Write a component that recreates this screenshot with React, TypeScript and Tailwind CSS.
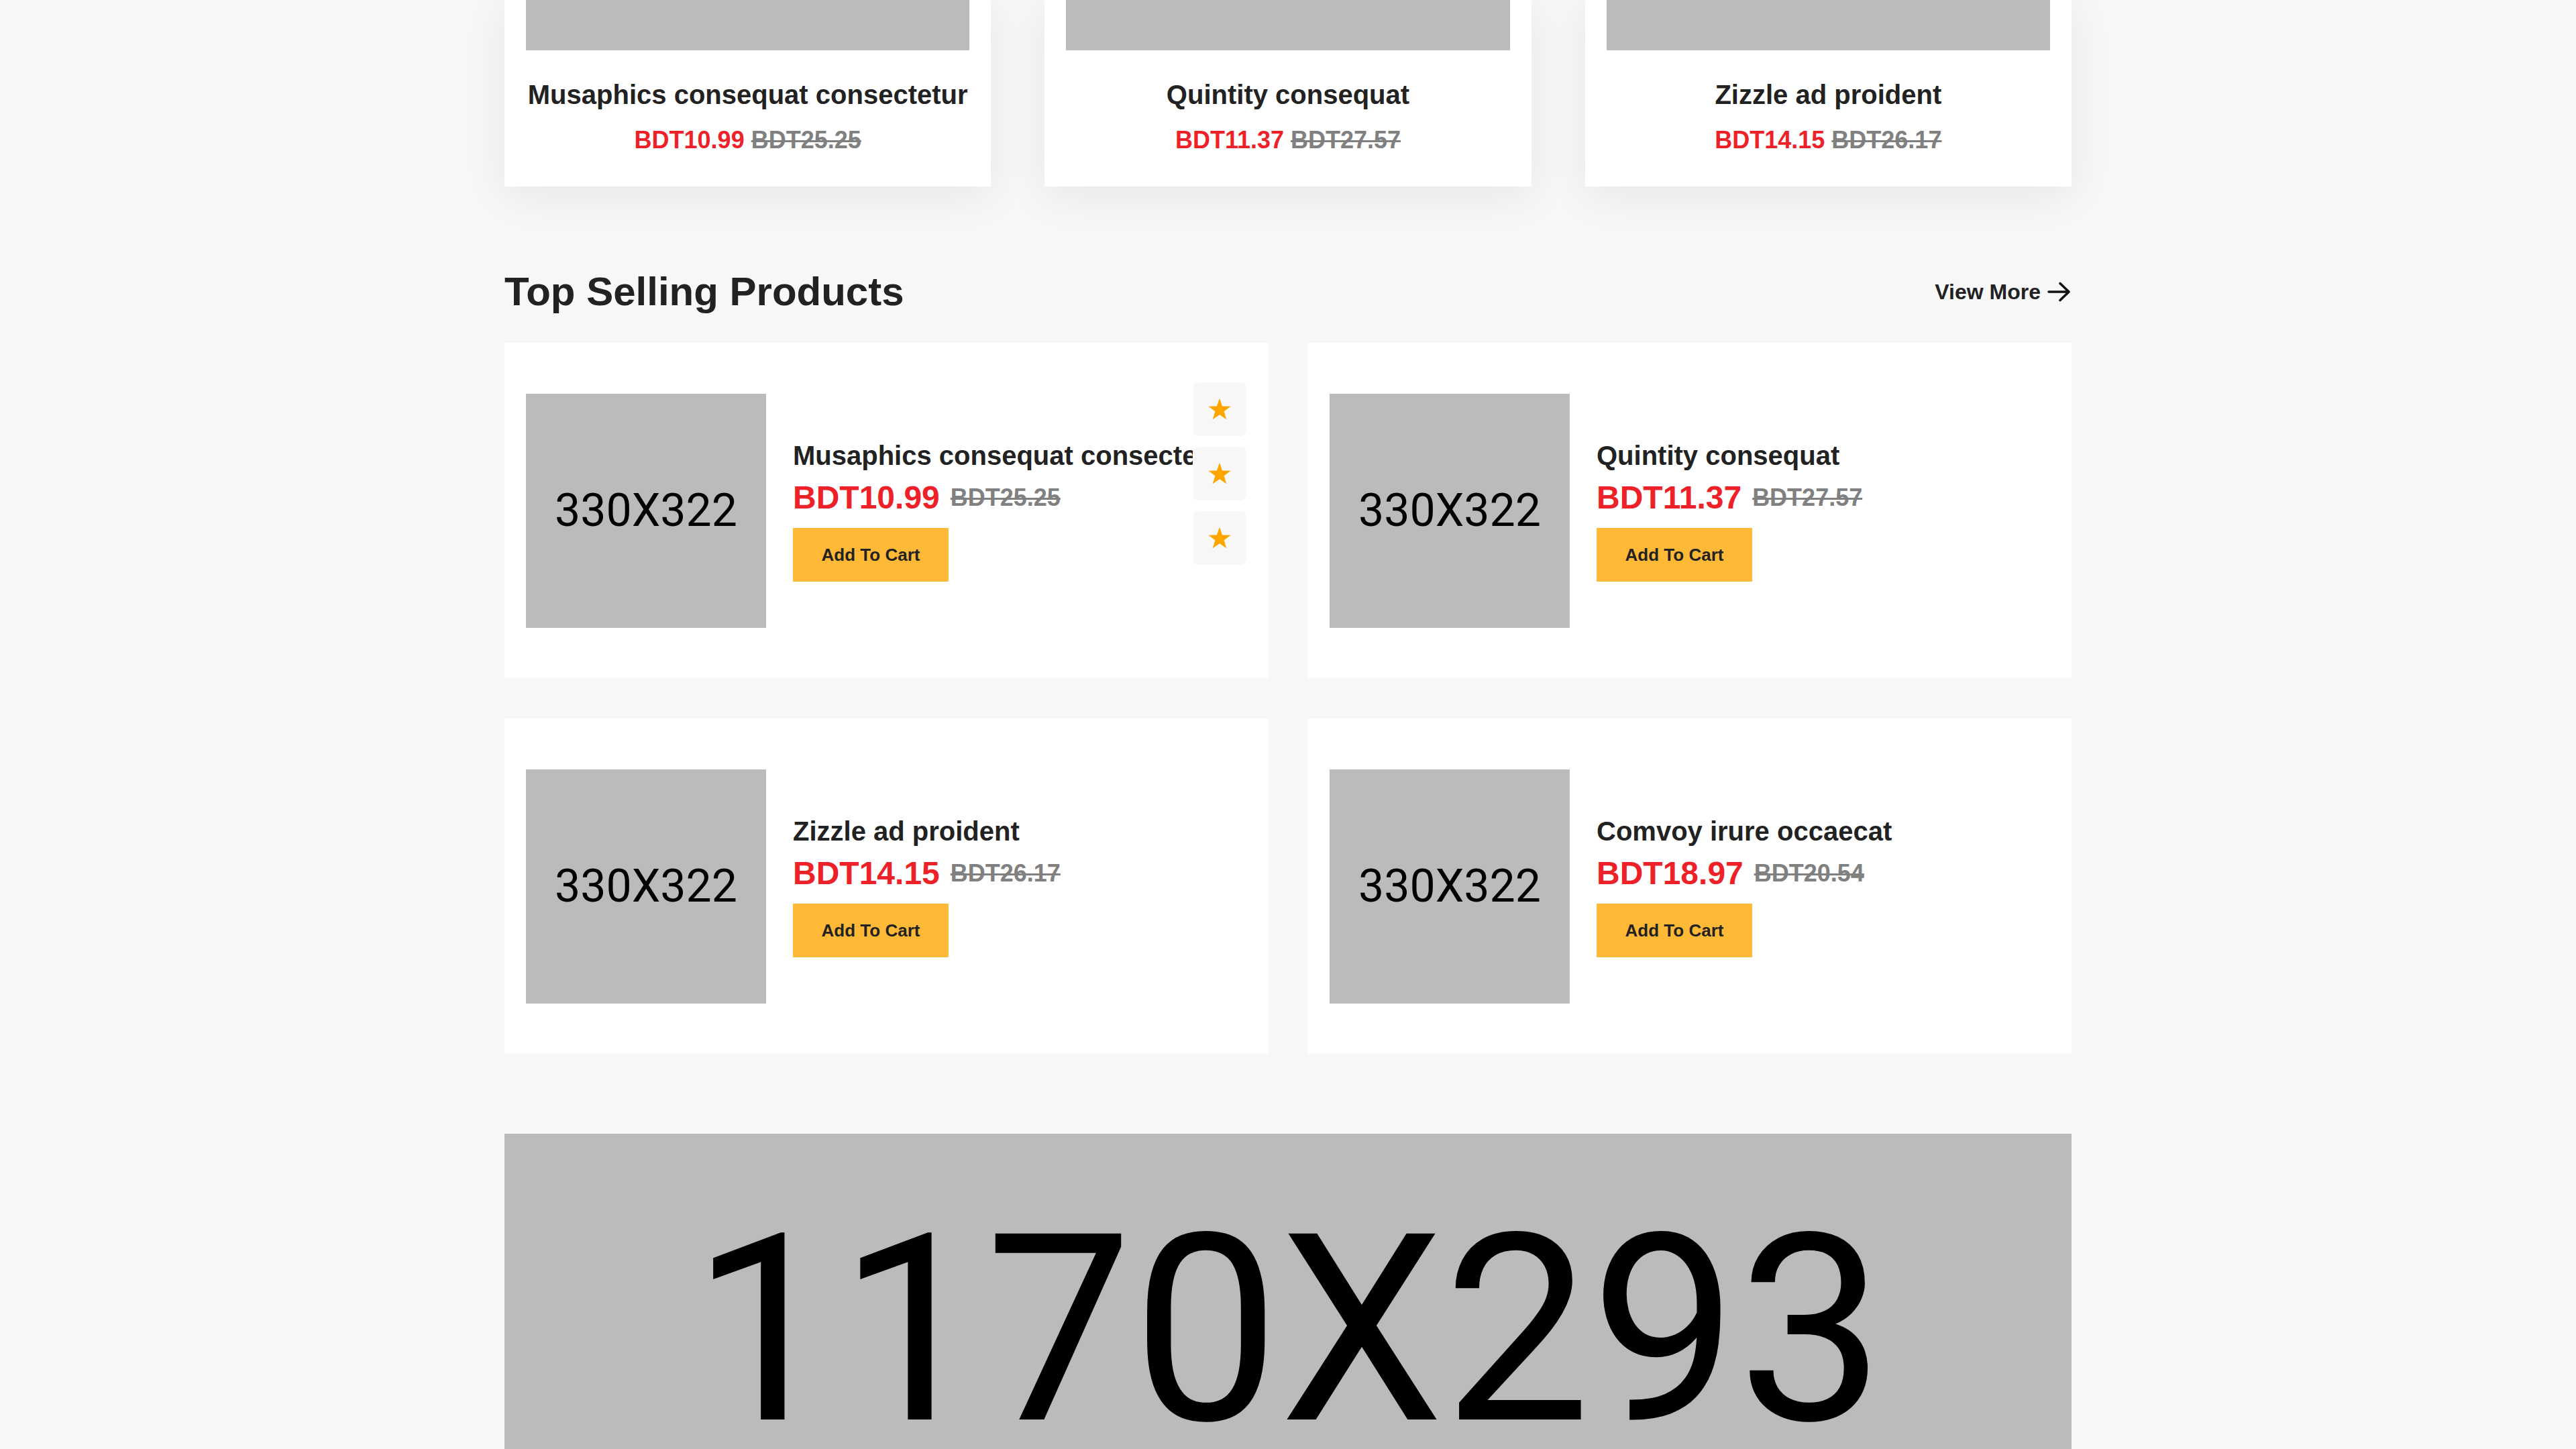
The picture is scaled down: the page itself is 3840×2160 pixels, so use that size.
import React from "react";

const topCards = [
  { title: "Musaphics consequat consectetur", price: "BDT10.99", old: "BDT25.25" },
  { title: "Quintity consequat", price: "BDT11.37", old: "BDT27.57" },
  { title: "Zizzle ad proident", price: "BDT14.15", old: "BDT26.17" },
];

const products = [
  { title: "Musaphics consequat consectetur", price: "BDT10.99", old: "BDT25.25", actions: true },
  { title: "Quintity consequat", price: "BDT11.37", old: "BDT27.57" },
  { title: "Zizzle ad proident", price: "BDT14.15", old: "BDT26.17" },
  { title: "Comvoy irure occaecat", price: "BDT18.97", old: "BDT20.54" },
];

function Star() {
  return (
    <svg width="36" height="34" viewBox="0 0 24 23" aria-hidden="true">
      <polygon
        points="12,0.5 14.8,8.4 23.2,8.6 16.5,13.7 18.9,21.8 12,17 5.1,21.8 7.5,13.7 0.8,8.6 9.2,8.4"
        fill="#ffa500"
      />
    </svg>
  );
}

function ArrowRight() {
  return (
    <svg width="36" height="30" viewBox="0 0 36 30" fill="none" aria-hidden="true">
      <path d="M2 15 H32 M19 2.5 L32 15 L19 27.5" stroke="#111" strokeWidth="3.6" strokeLinecap="round" strokeLinejoin="round" />
    </svg>
  );
}

function ProductCard({ p }: { p: (typeof products)[number] }) {
  return (
    <div className="relative flex h-[500px] items-center overflow-hidden bg-white px-8">
      <div className="flex h-[349px] w-[358px] shrink-0 items-center justify-center bg-[#bbbbbb]">
        <span className="font-['Roboto',sans-serif] text-[68px] leading-none text-black">330X322</span>
      </div>
      <div className="ml-[40px] flex min-w-0 flex-col items-start">
        <div className="whitespace-nowrap text-[40px] font-bold leading-[48px] text-[#222222]">{p.title}</div>
        <div className="mt-[11px] flex h-[56px] items-center gap-[16px]">
          <span className="text-[48px] font-bold leading-[56px] text-[#ee2128]">{p.price}</span>
          <span className="text-[36px] font-bold leading-[44px] text-[#808080] line-through decoration-[3px]">{p.old}</span>
        </div>
        <button className="mt-[17px] flex h-[80px] w-[232px] items-center justify-center bg-[#ffb936] text-[26px] font-bold text-[#222222]">
          Add To Cart
        </button>
      </div>
      {p.actions && (
        <div className="absolute right-8 top-[59px] flex flex-col gap-4">
          {[0, 1, 2].map((i) => (
            <div key={i} className="flex h-[80px] w-[80px] items-center justify-center rounded-lg bg-[#f7f7f7]">
              <Star />
            </div>
          ))}
        </div>
      )}
    </div>
  );
}

export default function App() {
  return (
    <div className="min-h-screen bg-[#f7f7f7] font-['Liberation_Sans',Arial,sans-serif]">
      <div className="mx-auto w-[2336px]">
        <div className="grid grid-cols-3 gap-[80px]">
          {topCards.map((c) => (
            <div key={c.title} className="bg-white px-8 pb-[47px] shadow-[0_12px_60px_rgba(0,0,0,0.07)]">
              <div className="h-[75px] bg-[#bbbbbb]" />
              <div className="mt-[42px] whitespace-nowrap text-center text-[40px] font-bold leading-[48px] text-[#222222]">
                {c.title}
              </div>
              <div className="mt-[22px] text-center text-[36px] font-bold leading-[44px]">
                <span className="text-[#ee2128]">{c.price}</span>{" "}
                <span className="text-[#808080] line-through decoration-[3px]">{c.old}</span>
              </div>
            </div>
          ))}
        </div>

        <div className="mt-[121px] flex items-center justify-between">
          <h2 className="text-[60px] font-bold leading-[72px] text-[#222222]">Top Selling Products</h2>
          <a className="flex items-center gap-[10px] text-[32px] font-bold leading-[40px] text-[#222222]" href="#">
            <span>View More</span>
            <ArrowRight />
          </a>
        </div>

        <div className="mt-[40px] grid grid-cols-2 gap-[60px]">
          {products.map((p) => (
            <ProductCard key={p.title} p={p} />
          ))}
        </div>

        <div className="mt-[119px] flex h-[585px] items-center justify-center bg-[#bbbbbb]">
          <span className="font-['Roboto',sans-serif] text-[390px] leading-none text-black">1170X293</span>
        </div>
      </div>
    </div>
  );
}
